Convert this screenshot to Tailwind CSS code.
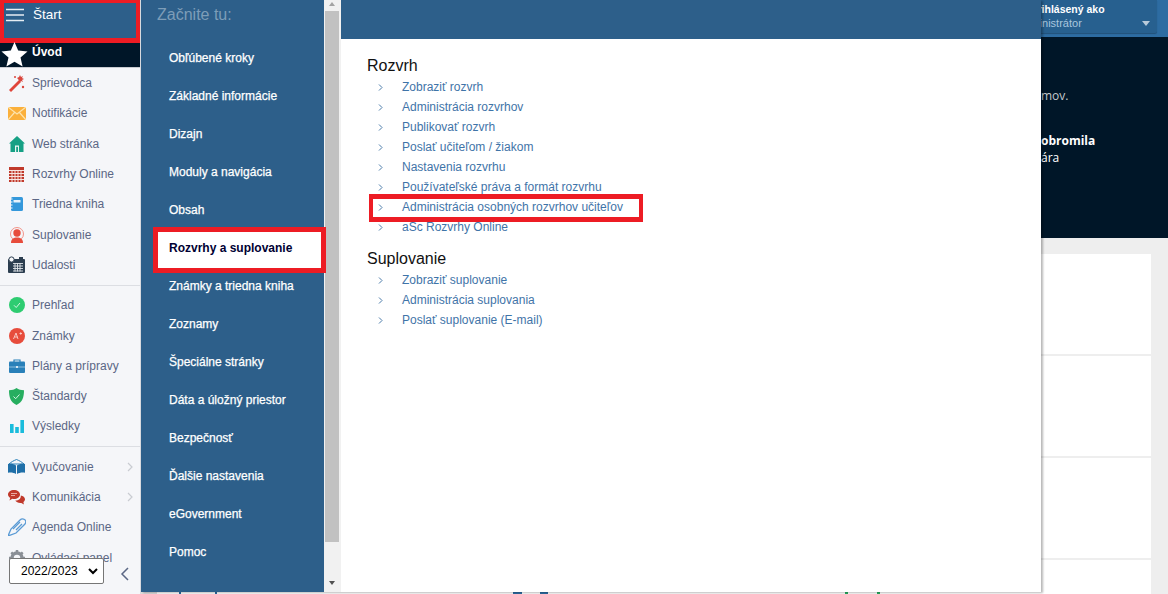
<!DOCTYPE html>
<html lang="sk">
<head>
  <meta charset="UTF-8" />
  <title>Štart</title>
  <script src="https://cdn.jsdelivr.net/npm/@tailwindcss/browser@4"></script>
</head>
<body class="bg-[#eeeeee] font-['Liberation_Sans',Arial,sans-serif]">
<div class="relative flex w-[1168px] h-[594px] overflow-hidden">

  <!-- Left sidebar -->
  <aside class="relative w-[141px] h-full shrink-0 bg-[#f5f6f9] border-r border-[#d8dade] text-[12px] text-[#5b6785]">
    <div class="h-[43px] bg-[#2d5f8a] border-x-[4px] border-t-[3px] border-b-[5px] border-[#ed1c24] flex items-start text-white">
      <svg class="mt-[5px] ml-[2px]" width="18" height="14" viewBox="0 0 18 14"><path d="M0 1.500h18M0 7h18M0 12.500h18" stroke="#e6edf3" stroke-width="1.500"/></svg>
      <span class="ml-[9px] mt-[4px] text-[13.5px] leading-[16px]">Štart</span>
    </div>
    <div class="h-[24px] bg-[#001628] flex items-center text-white font-bold relative">
      <svg class="absolute left-[1px] top-[-1px]" width="27" height="25" viewBox="0 0 27 25"><path d="M13.500 0l3.700 8.600 9.300.8-7 6.100 2.100 9.100-8.100-4.800-8.100 4.800 2.100-9.100-7-6.100 9.300-.8z" fill="#fff"/></svg>
      <span class="ml-[32px] -mt-[6px]">Úvod</span>
    </div>
    <div class="h-px bg-[#c9ccd2]"></div>

    <a class="flex items-center h-[30.3px]"><span class="w-[32px] flex justify-center pl-[1px]">
      <svg width="18" height="18" viewBox="0 0 18 18"><path d="M1 16L11 6l2 2L3 18z" fill="#e0453a"/><path d="M12 1l1 2 2-1-1 2 2 1-2 1 1 2-2-1-1 1-2-3-1-1 2-1z" fill="#d9463c"/><circle cx="15" cy="13" r="1.200" fill="#d9463c"/><circle cx="7" cy="3" r="1" fill="#d9463c"/></svg></span>Sprievodca</a>
    <a class="flex items-center h-[30.3px]"><span class="w-[32px] flex justify-center pl-[1px]">
      <svg width="18" height="13" viewBox="0 0 18 13"><rect width="18" height="13" fill="#fbb03b"/><path d="M0 0l9 7 9-7M0 13l6.500-7.500M18 13l-6.500-7.500" fill="none" stroke="#fde3ad" stroke-width="1.200"/></svg></span>Notifikácie</a>
    <a class="flex items-center h-[30.3px]"><span class="w-[32px] flex justify-center pl-[1px]">
      <svg width="16" height="16" viewBox="0 0 16 16"><path d="M8 0L0 7.500h1.500V16h13V7.500H16z" fill="#16a085"/><rect x="6" y="9.500" width="4" height="6.500" fill="#e9f5f2"/><rect x="7.200" y="10.800" width="1.800" height="5.200" fill="#16a085"/></svg></span>Web stránka</a>
    <a class="flex items-center h-[30.3px]"><span class="w-[32px] flex justify-center pl-[1px]">
      <svg width="15" height="15" viewBox="0 0 15 15"><rect width="15" height="15" fill="#c0392b"/><path d="M3 3.500v11.500M6 3.500v11.500M9 3.500v11.500M12 3.500v11.500M0 3.500h15M0 6.500h15M0 9.500h15M0 12.500h15" stroke="#f7e4e1" stroke-width="1"/></svg></span>Rozvrhy Online</a>
    <a class="flex items-center h-[30.3px]"><span class="w-[32px] flex justify-center pl-[1px]">
      <svg width="12" height="14" viewBox="0 0 12 14"><rect width="12" height="14" rx="1.500" fill="#3498db"/><rect x="2.500" y="3" width="7" height="2.500" fill="#e8f3fb"/><path d="M0 2h1.500M0 5h1.500M0 8h1.500M0 11h1.500" stroke="#fff"/></svg></span>Triedna kniha</a>
    <a class="flex items-center h-[30.3px]"><span class="w-[32px] flex justify-center pl-[1px]">
      <svg width="16" height="16" viewBox="0 0 16 16"><circle cx="8" cy="7" r="6.500" fill="none" stroke="#f0897d" stroke-width="0.900"/><circle cx="8" cy="6" r="3.700" fill="#e74c3c"/><path d="M2 16c0-4 2.500-5.500 6-5.500s6 1.500 6 5.500z" fill="#e74c3c"/></svg></span>Suplovanie</a>
    <a class="flex items-center h-[30.3px]"><span class="w-[32px] flex justify-center pl-[1px]">
      <svg width="17" height="17" viewBox="0 0 17 17"><rect y="3" width="17" height="14" rx="1" fill="#2c3e50"/><circle cx="3.500" cy="3.500" r="2.600" fill="#f5f6f9" stroke="#2c3e50"/><path d="M5 7.500h10M5 10h10M5 12.500h10M5 15h10M7 7v8.500M9.500 7v8.500M12 7v8.500" stroke="#dfe3e8" stroke-width="0.900"/><rect x="11" y="1" width="4" height="2" fill="#2c3e50"/></svg></span>Udalosti</a>

    <div class="h-[10px] flex items-center"><div class="w-full h-px bg-[#dcdee3]"></div></div>

    <a class="flex items-center h-[30.3px]"><span class="w-[32px] flex justify-center pl-[1px]">
      <svg width="16" height="16" viewBox="0 0 16 16"><circle cx="8" cy="8" r="8" fill="#2ecc71"/><path d="M5 8.300l2.200 2.200L11 6" fill="none" stroke="#d5f5e3" stroke-width="1"/></svg></span>Prehľad</a>
    <a class="flex items-center h-[30.3px]"><span class="w-[32px] flex justify-center pl-[1px]">
      <svg width="16" height="16" viewBox="0 0 16 16"><circle cx="8" cy="8" r="8" fill="#e74c3c"/><path d="M4.500 11L7 5l2 6M5.500 9h3M10.500 5.500h2.500M11.700 4.300v2.400" fill="none" stroke="#f9d3ce" stroke-width="0.900"/></svg></span>Známky</a>
    <a class="flex items-center h-[30.3px]"><span class="w-[32px] flex justify-center pl-[1px]">
      <svg width="16" height="14" viewBox="0 0 16 14"><path d="M5 3V1h6v2" fill="none" stroke="#2980b9" stroke-width="1.200"/><rect y="2.500" width="16" height="11.500" rx="1" fill="#2980b9"/><path d="M0 8h16" stroke="#b8d8ee" stroke-width="0.700"/><rect x="7" y="7" width="2" height="2" fill="#d6e9f5"/></svg></span>Plány a prípravy</a>
    <a class="flex items-center h-[30.3px]"><span class="w-[32px] flex justify-center pl-[1px]">
      <svg width="15" height="17" viewBox="0 0 15 17"><path d="M7.500 0c2 1.500 4.500 2.200 7.500 2.200 0 7-1.500 11.800-7.500 14.800C1.500 14 0 9.200 0 2.200 3 2.200 5.500 1.500 7.500 0z" fill="#27ae60"/><path d="M4.500 8.500l2.200 2.200 3.800-4.200" fill="none" stroke="#d5f5e3" stroke-width="1"/></svg></span>Štandardy</a>
    <a class="flex items-center h-[30.3px]"><span class="w-[32px] flex justify-center pl-[1px]">
      <svg width="14" height="13" viewBox="0 0 14 13"><rect y="4" width="3.600" height="9" fill="#1abcdc"/><rect x="5.200" y="7" width="3.600" height="6" fill="#1abcdc"/><rect x="10.400" width="3.600" height="13" fill="#1abcdc"/></svg></span>Výsledky</a>

    <div class="h-[10px] flex items-center"><div class="w-full h-px bg-[#dcdee3]"></div></div>

    <a class="flex items-center h-[30.3px]"><span class="w-[32px] flex justify-center pl-[1px]">
      <svg width="17" height="15" viewBox="0 0 17 15"><path d="M8.500 .5C6 1.500 3 3 1 5h15C14 3 11 1.500 8.500 .5z" fill="none" stroke="#2980b9"/><path d="M0 5c3-.5 6 0 8 1.500V15c-2-1.300-5-1.800-8-1.300zM17 5c-3-.5-6 0-8 1.500V15c2-1.300 5-1.800 8-1.300z" fill="#1f6fa8"/></svg></span>Vyučovanie
      <svg class="absolute left-[127px]" width="6" height="10" viewBox="0 0 6 10"><path d="M1 1l4 4-4 4" fill="none" stroke="#c9ccd2" stroke-width="1.200"/></svg></a>
    <a class="flex items-center h-[30.3px]"><span class="w-[32px] flex justify-center pl-[1px]">
      <svg width="17" height="15" viewBox="0 0 17 15"><path d="M6 0c3.300 0 6 2 6 4.500S9.300 9 6 9c-.6 0-1.200 0-1.700-.2L1.500 10.500l.7-2.700C.8 7 0 5.800 0 4.500 0 2 2.700 0 6 0z" fill="#c0392b"/><path d="M12.800 5.500c2.400.4 4.200 1.900 4.200 3.700 0 1.100-.6 2-1.600 2.700l.5 2.600-2.600-1.600c-2.700.3-5-.6-6-2.400 3.500 0 5.800-2 5.500-5z" fill="#c0392b"/><path d="M3 3.500h6M3 5.500h4" stroke="#f5c6c0" stroke-width="0.800"/></svg></span>Komunikácia
      <svg class="absolute left-[127px]" width="6" height="10" viewBox="0 0 6 10"><path d="M1 1l4 4-4 4" fill="none" stroke="#c9ccd2" stroke-width="1.200"/></svg></a>
    <a class="flex items-center h-[30.3px]"><span class="w-[32px] flex justify-center pl-[1px]">
      <svg width="18" height="18" viewBox="0 0 18 18"><path d="M0 18l3-7L12 2c1.500-1.500 3-1.500 4.500-.5S18 4.500 17 6l-9 9z" fill="none" stroke="#5b9bd5" stroke-width="1.300"/><path d="M5 11l7-7M8 12l6-6" stroke="#5b9bd5" stroke-width="1.300"/></svg></span>Agenda Online</a>
    <a class="flex items-center h-[30.3px]"><span class="w-[32px] flex justify-center pl-[1px]">
      <svg width="16" height="16" viewBox="0 0 16 16"><circle cx="8" cy="8" r="5" fill="none" stroke="#8a8f96" stroke-width="3.500"/><path d="M8 0v3M8 13v3M0 8h3M13 8h3M2.300 2.300l2 2M11.700 11.700l2 2M13.700 2.300l-2 2M4.300 11.700l-2 2" stroke="#8a8f96" stroke-width="2.500"/></svg></span>Ovládací panel</a>

    <!-- School year picker sits over the list -->
    <div class="absolute left-[9px] top-[558px] w-[95px] h-[26px] bg-white border border-[#767676] rounded-[2px] flex items-center pl-[11px] text-[12px] text-black">2022/2023
      <svg class="absolute right-[5px] top-[9px]" width="10" height="7" viewBox="0 0 10 7"><path d="M1 1l4 4 4-4" fill="none" stroke="#000" stroke-width="2"/></svg>
    </div>
    <svg class="absolute left-[120px] top-[567px]" width="9" height="14" viewBox="0 0 9 14"><path d="M8 1L2 7l6 6" fill="none" stroke="#5b6785" stroke-width="1.500"/></svg>
  </aside>

  <!-- Page behind the menu -->
  <main class="flex-1 flex flex-col">
    <header class="h-[37px] shrink-0 bg-[#2d6ca2] flex justify-end pr-[11px]">
      <div class="w-[200px] h-[33px] bg-[#27608f] rounded-b-[2px] relative pl-[73.5px] pt-[2px] text-[10.5px] leading-[14px] shadow-[0_1px_1px_rgba(0,0,0,0.25)]">
        <div class="text-white font-bold whitespace-nowrap">Prihlásený ako</div>
        <div class="-ml-[13.5px] text-[11px] text-[#a9c6de] whitespace-nowrap">Administrátor</div>
        <div class="absolute right-[7px] top-[21px] w-0 h-0 border-x-[4px] border-x-transparent border-t-[5px] border-t-[#b9cbda]"></div>
      </div>
    </header>
    <section class="h-[201px] shrink-0 bg-[#001628] pl-[900px] pt-[51px] text-[12px] font-['Open_Sans',sans-serif] text-[#c4c8cc]">
      <div class="leading-[16px]">mov.</div>
      <div class="mt-[28px] leading-[17px] font-bold text-white">obromila</div>
      <div class="leading-[17px] text-white">ára</div>
    </section>
    <section class="flex-1 pt-[16px] pr-[17px] flex flex-col gap-[2px]">
      <div class="h-[100px] shrink-0 bg-white"></div>
      <div class="h-[100px] shrink-0 bg-white"></div>
      <div class="h-[100px] shrink-0 bg-white"></div>
      <div class="h-[100px] shrink-0 bg-white flex items-start pt-[32px]">
        <span class="w-[16px] h-[2px] bg-[#dddddd]"></span>
        <span class="ml-[22px] w-[2px] h-[2px] bg-[#2d6ca2]"></span>
        <span class="ml-[34px] w-[2px] h-[2px] bg-[#2d6ca2]"></span>
        <span class="ml-[296px] w-[9px] h-[2px] bg-[#2d6ca2]"></span>
        <span class="ml-[18px] w-[8px] h-[2px] bg-[#2d6ca2]"></span>
        <span class="ml-[297px] w-[3px] h-[2px] bg-[#27ae60]"></span>
        <span class="ml-[29px] w-[3px] h-[2px] bg-[#27ae60]"></span>
      </div>
    </section>
  </main>

  <!-- Start menu overlay -->
  <div class="absolute left-[141px] top-0 w-[900px] h-[592px] flex shadow-[2px_1px_2px_rgba(0,0,0,0.28)] z-10">
    <nav class="relative w-[183px] h-full bg-[#2d5f8a] text-white text-[12px] [-webkit-text-stroke:0.25px_white]">
      <div class="h-[39px] pl-[16px] pt-[5px] text-[16px] leading-[20px] text-[#7d9db8] [-webkit-text-stroke:0]">Začnite tu:</div>
      <ul>
        <li class="h-[38px] pl-[28px] flex items-center">Obľúbené kroky</li>
        <li class="h-[38px] pl-[28px] flex items-center">Základné informácie</li>
        <li class="h-[38px] pl-[28px] flex items-center">Dizajn</li>
        <li class="h-[38px] pl-[28px] flex items-center">Moduly a navigácia</li>
        <li class="h-[38px] pl-[28px] flex items-center">Obsah</li>
        <li class="h-[46px] -mt-[2px] -mb-[6px] relative ml-[12px] w-[173px] pl-[11px] pb-[5px] flex items-center bg-white border-[5px] border-[#ed1c24] font-bold text-[#000033] [-webkit-text-stroke:0] z-10">Rozvrhy a suplovanie</li>
        <li class="h-[38px] pl-[28px] flex items-center">Známky a triedna kniha</li>
        <li class="h-[38px] pl-[28px] flex items-center">Zoznamy</li>
        <li class="h-[38px] pl-[28px] flex items-center">Špeciálne stránky</li>
        <li class="h-[38px] pl-[28px] flex items-center">Dáta a úložný priestor</li>
        <li class="h-[38px] pl-[28px] flex items-center">Bezpečnosť</li>
        <li class="h-[38px] pl-[28px] flex items-center">Ďalšie nastavenia</li>
        <li class="h-[38px] pl-[28px] flex items-center">eGovernment</li>
        <li class="h-[38px] pl-[28px] flex items-center">Pomoc</li>
      </ul>
    </nav>

    <!-- Scrollbar -->
    <div class="relative w-[17px] h-full bg-[#f1f1f1]">
      <div class="absolute left-[5px] top-[2px] w-0 h-0 border-x-[3.500px] border-x-transparent border-b-[4px] border-b-[#a3a3a3]"></div>
      <div class="absolute left-[1px] top-[11px] w-[14px] h-[531px] bg-[#c1c1c1]"></div>
      <div class="absolute left-[5px] top-[581px] w-0 h-0 border-x-[3.500px] border-x-transparent border-t-[4px] border-t-[#505050]"></div>
    </div>

    <div class="relative flex-1 bg-white">
      <div class="h-[39px] bg-[#2d5f8a]"></div>
      <div class="pl-[26px] pt-[17px] text-[12px] text-[#3f74a8]">
        <h3 class="text-[16px] leading-[20px] text-[#111]">Rozvrh</h3>
        <ul class="mt-[1px] leading-[20px]">
          <li class="flex h-[20px]"><svg class="ml-[11px] mt-[7px]" width="5" height="7" viewBox="0 0 5 7"><path d="M1 .5l3 3-3 3" fill="none" stroke="#4a7ba8"/></svg><span class="ml-[19px]">Zobraziť rozvrh</span></li>
          <li class="flex h-[20px]"><svg class="ml-[11px] mt-[7px]" width="5" height="7" viewBox="0 0 5 7"><path d="M1 .5l3 3-3 3" fill="none" stroke="#4a7ba8"/></svg><span class="ml-[19px]">Administrácia rozvrhov</span></li>
          <li class="flex h-[20px]"><svg class="ml-[11px] mt-[7px]" width="5" height="7" viewBox="0 0 5 7"><path d="M1 .5l3 3-3 3" fill="none" stroke="#4a7ba8"/></svg><span class="ml-[19px]">Publikovať rozvrh</span></li>
          <li class="flex h-[20px]"><svg class="ml-[11px] mt-[7px]" width="5" height="7" viewBox="0 0 5 7"><path d="M1 .5l3 3-3 3" fill="none" stroke="#4a7ba8"/></svg><span class="ml-[19px]">Poslať učiteľom / žiakom</span></li>
          <li class="flex h-[20px]"><svg class="ml-[11px] mt-[7px]" width="5" height="7" viewBox="0 0 5 7"><path d="M1 .5l3 3-3 3" fill="none" stroke="#4a7ba8"/></svg><span class="ml-[19px]">Nastavenia rozvrhu</span></li>
          <li class="flex h-[20px]"><svg class="ml-[11px] mt-[7px]" width="5" height="7" viewBox="0 0 5 7"><path d="M1 .5l3 3-3 3" fill="none" stroke="#4a7ba8"/></svg><span class="ml-[19px]">Používateľské práva a formát rozvrhu</span></li>
          <li class="flex h-[20px] relative"><svg class="ml-[11px] mt-[7px]" width="5" height="7" viewBox="0 0 5 7"><path d="M1 .5l3 3-3 3" fill="none" stroke="#4a7ba8"/></svg><span class="ml-[19px]">Administrácia osobných rozvrhov učiteľov</span>
            <div class="absolute left-[2px] top-[-3px] w-[274px] h-[28px] border-x-[4px] border-y-[5px] border-[#ed1c24]"></div></li>
          <li class="flex h-[20px]"><svg class="ml-[11px] mt-[7px]" width="5" height="7" viewBox="0 0 5 7"><path d="M1 .5l3 3-3 3" fill="none" stroke="#4a7ba8"/></svg><span class="ml-[19px]">aSc Rozvrhy Online</span></li>
        </ul>
        <h3 class="mt-[12px] text-[16px] leading-[20px] text-[#111]">Suplovanie</h3>
        <ul class="mt-[1px] leading-[20px]">
          <li class="flex h-[20px]"><svg class="ml-[11px] mt-[7px]" width="5" height="7" viewBox="0 0 5 7"><path d="M1 .5l3 3-3 3" fill="none" stroke="#4a7ba8"/></svg><span class="ml-[19px]">Zobraziť suplovanie</span></li>
          <li class="flex h-[20px]"><svg class="ml-[11px] mt-[7px]" width="5" height="7" viewBox="0 0 5 7"><path d="M1 .5l3 3-3 3" fill="none" stroke="#4a7ba8"/></svg><span class="ml-[19px]">Administrácia suplovania</span></li>
          <li class="flex h-[20px]"><svg class="ml-[11px] mt-[7px]" width="5" height="7" viewBox="0 0 5 7"><path d="M1 .5l3 3-3 3" fill="none" stroke="#4a7ba8"/></svg><span class="ml-[19px]">Poslať suplovanie (E-mail)</span></li>
        </ul>
      </div>
    </div>
  </div>

</div>
</body>
</html>
